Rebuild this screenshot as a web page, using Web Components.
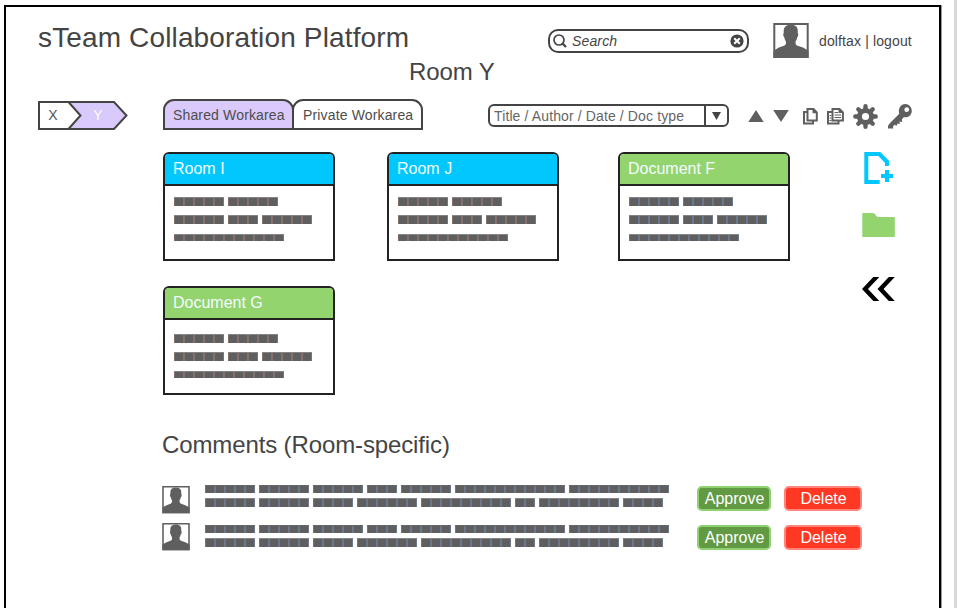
<!DOCTYPE html>
<html lang="en">
<head>
<meta charset="utf-8">
<title>sTeam Collaboration Platform</title>
<style>
html,body{margin:0;height:100%;overflow:hidden;background:#fff}
body{font-family:"Liberation Sans",Arial,sans-serif;color:#444}
</style>
</head>
<body>
<steam-app></steam-app>
<script>
const define = (name, html, setup) => customElements.define(name, class extends HTMLElement {
  connectedCallback() {
    if (this.shadowRoot) return;
    const t = document.createElement('template');
    t.innerHTML = html;
    this.attachShadow({mode: 'open'}).append(t.content.cloneNode(true));
    if (setup) setup(this, this.shadowRoot);
  }
});

define('user-avatar', `
<style>:host{display:block;width:var(--size,36px);height:var(--size,36px)}svg{display:block;width:100%;height:100%}</style>
<svg viewBox="0 0 36 36" fill="#5f5f5f"><path fill="#fff" stroke="#5f5f5f" stroke-width="2" d="M1.300 1H34.700V34H1.300Z"/>
<path d="M.5 35V27.800Q6 24 11 22.800Q13.300 22 13 18.500Q11.700 17 11.300 14.500Q10.200 14 10.200 10.800L10.800 10C10.200 4.500 12.500 1.800 17.700 1.800C23.200 1.800 25.400 4.500 24.700 10L25.300 10.800Q25.300 14 24.200 14.500Q23.800 17 22.500 18.500Q22.200 22 24.500 22.800Q30 24 35.500 27.800V35Z"/></svg>`);

const ICONS = {
  up: [16, 12, '<path d="M8 0 15.700 12H.3Z"/>'],
  down: [16, 12, '<path d="M.2 0H15.800L8 12Z"/>'],
  copy: [15, 17, '<g fill="#fff" stroke="#5f5f5f" stroke-width="2"><path d="M1 4H10V15.500H1Z"/><path d="M4.500 1H10.500L13.800 4.300V12.500H4.500Z"/></g><path d="M9.500 1V5.200H14L10 1Z"/>'],
  paste: [17, 17, '<g fill="#fff" stroke="#5f5f5f" stroke-width="2"><path d="M1 4H11.500V15.500H1Z"/><path d="M5.500 1H12.500L15.900 4.300V12.500H5.500Z"/></g><path d="M11.500 1V5H16L12 1Z"/><path stroke="#5f5f5f" d="M7.500 4.500H11M7.500 7H14M7.500 9.500H14M2.500 7.500H4.500M2.500 10H4.500M2.500 12.500H4.500"/>'],
  gear: [25, 25, '<path stroke="#5f5f5f" stroke-width="4.400" stroke-linecap="round" d="M12.500 2.300V6M12.500 19V22.700M2.300 12.500H6M19 12.500H22.700M5.300 5.300 8 8M17 17 19.700 19.700M5.300 19.700 8 17M17 8 19.700 5.300"/><circle cx="12.500" cy="12.500" r="6.100" fill="none" stroke="#5f5f5f" stroke-width="5"/>'],
  key: [24, 25, '<path fill-rule="evenodd" d="M17.300 0A6.600 6.600 0 0 1 23.800 6.700C23.800 11.500 19.500 14 15.700 13.200L14 15.200 14 18 11.500 17.600 11.800 20 9.500 19.500 8.800 21.800 6.300 20.800 5 22.800 5.300 24.500H0V22.500Q.5 20.500 2.500 18.500L11.300 9.800C9.700 5 12.800 0 17.300 0ZM18.700 3.200A2.400 2.400 0 1 0 18.800 8A2.400 2.400 0 0 0 18.700 3.200Z"/>'],
  addfile: [30, 32, '<path fill="#00c8ff" d="M.3 0H16.200L25 8.800V14H21V11L14.500 4H4.300V28H15.700V32H.3ZM21 18H25V22H29V26H25V30H21V26H17V22H21Z"/>'],
  folder: [33, 24, '<path fill="#93d46f" d="M.3 0H11.700L15.500 4H32.800V24H.3Z"/>'],
  back: [33, 24, '<path fill="#000" d="M11.300 0H17.300L6 12 17.300 24H11.300L0 12ZM26.800 0H32.800L21.500 12 32.800 24H26.800L15.500 12Z"/>'],
  search: [14, 14, '<circle cx="6" cy="6" r="5" fill="none" stroke="#444" stroke-width="1.700"/><path stroke="#444" stroke-width="2.300" d="M9.300 9.300 13 13"/>'],
  clear: [14, 14, '<circle cx="7" cy="7" r="6.600" fill="#444"/><path stroke="#fff" stroke-width="2" d="M4.200 4.200 9.800 9.800M9.800 4.200 4.200 9.800"/>'],
  arrow: [9, 8, '<path fill="#444" d="M0 0H9L4.500 8Z"/>']
};
define('ui-icon', `<style>:host{display:block;flex:none}svg{display:block}</style>`, (host, root) => {
  const [w, h, body] = ICONS[host.getAttribute('name')];
  root.innerHTML += `<svg width="${w}" height="${h}" viewBox="0 0 ${w} ${h}" fill="#5f5f5f">${body}</svg>`;
});

/* Placeholder copy. Lines are split by "/", each is "words:height:space below";
   a word is its length in 10px blocks. */
define('block-lines', `
<style>:host{display:block}.l{display:flex;gap:4px}
i{background:repeating-linear-gradient(90deg,#84706a 0 1px,#5f5f5f 1px 9px,#6b7892 9px 10px);border-top:1px solid #858585;box-sizing:border-box}
.l.s i{border-top-color:#666}</style>`, (host, root) => {
  host.getAttribute('words').split('/').forEach(line => {
    const [words, height, after] = line.split(':');
    const row = document.createElement('div');
    row.className = 'l' + (height === '8' ? ' s' : '');
    row.style.height = height + 'px';
    row.style.marginBottom = (after || 0) + 'px';
    words.split(',').forEach(n => {
      const i = document.createElement('i');
      i.style.width = n * 10 + 'px';
      row.append(i);
    });
    root.append(row);
  });
});

define('item-card', `
<style>
:host{display:block;box-sizing:border-box;width:172px;height:109px;border:2px solid #222;border-radius:6px 6px 0 0;overflow:hidden;background:#fff}
header{height:30px;border-bottom:2px solid #222;background:#00c8ff;color:#f4fbff;font-size:16px;line-height:29px;padding-left:8px}
:host([kind=document]) header{background:#93d46f}
block-lines{padding:var(--body,11px) 0 0 9px}
</style>
<header><slot></slot></header><block-lines words="5,5:9:9/5,3,5:9:10/11:7"></block-lines>`);

define('action-button', `
<style>:host{display:block;box-sizing:border-box;width:74px;height:25px;border:2px solid #8fd070;border-radius:5px;background:#619a43;color:#fff;font-size:16px;line-height:21px;text-align:center;text-indent:1px}
:host([kind=delete]){width:78px;background:#ff3823;border-color:#ff857a}</style><slot></slot>`);

define('comment-row', `
<style>:host{display:flex;height:27px}
user-avatar{--size:28px;margin-top:var(--av,1px)}
block-lines{width:492px;margin-left:15px}
action-button{margin-top:var(--btn,1px)}
action-button[kind]{margin-left:13px}</style>
<user-avatar></user-avatar><block-lines words="5,5,5,3,5,11,10:8:5/5,5,4,6,9,2,8,4:9"></block-lines>
<action-button>Approve</action-button><action-button kind="delete">Delete</action-button>`);

define('room-path', `
<style>:host{display:grid;width:90px;height:29px;font-size:14px;line-height:29px}svg,div{grid-area:1/1}
div{display:flex;color:#555}::slotted(*){width:30px;text-align:center}::slotted(:last-child){color:#fff;margin-left:15px}</style>
<svg width="90" height="29" stroke="#444" stroke-width="2" fill="#dac9fb"><path d="M30 1H76L88.500 14.500 76 28H30Z"/><path fill="#fff" d="M1 1H30.500L42.500 14.500 30.500 28H1Z"/></svg><div><slot></slot></div>`);

define('tab-item', `
<style>:host{display:block;box-sizing:border-box;width:131px;height:31px;border:2px solid #444;border-radius:11px 11px 0 0;background:#fff;padding-left:8px;font-size:14px;line-height:29px;letter-spacing:.15px;color:#4d4d4d;white-space:nowrap}
:host([selected]){background:#dac9fb}:host(:not([selected])){margin-left:-2px;padding-left:9px}</style><slot></slot>`);

define('search-field', `
<style>:host{display:flex;align-items:center;box-sizing:border-box;width:201px;height:24px;border:2px solid #444;border-radius:10px;padding:0 3px;font:italic 14px/20px "Liberation Sans",Arial,sans-serif;letter-spacing:.15px}
span{flex:1;margin-left:5px}</style>
<ui-icon name="search"></ui-icon><span><slot></slot></span><ui-icon name="clear"></ui-icon>`);

define('select-field', `
<style>:host{display:flex;box-sizing:border-box;width:241px;height:23px;border:2px solid #444;border-radius:6px;font-size:14px;line-height:20px;letter-spacing:.12px;color:#666;white-space:nowrap}
span{flex:1;padding-left:4px}b{width:21px;border-left:2px solid #444;display:grid;place-items:center}</style>
<span><slot></slot></span><b><ui-icon name="arrow"></ui-icon></b>`);

define('steam-app', `
<style>
:host{display:flex;height:608px;box-sizing:border-box;padding:5px 0 0 4px;border-right:3px solid #d8d8d8;overflow:hidden}
main{box-sizing:border-box;width:937px;height:620px;border:2px solid #000;border-bottom:0;box-shadow:1px 0 #999;padding-left:32px;flex:none}
h1,h2{font-weight:400;margin:0;white-space:nowrap}
.head{display:flex;height:48px}
h1{width:510px;font-size:28px;line-height:32px;margin-top:15px;letter-spacing:.14px}
search-field{margin-top:22px}
.head user-avatar{margin:16px 0 0 24px}
.user{margin:24px 0 0 10px;font-size:14px;line-height:20px;letter-spacing:.13px;white-space:nowrap}
.room{padding-left:371px;font-size:24px;line-height:28px;margin-top:3px;letter-spacing:-.1px}
.bar{display:flex;margin-top:13px;height:31px}
room-path{margin-top:2px}
.tabs{display:flex;margin-left:35px;width:325px}
select-field{margin-top:5px}
.tools{display:flex;align-items:center;height:25px;margin:5px 0 0 19px}
.tri{margin-top:-2px}
.main{display:grid;grid-template-columns:700px auto;margin-top:22px;height:272px}
.cards{display:grid;grid-template-columns:224px 231px 172px;grid-auto-rows:109px;row-gap:25px;padding-left:125px}
.last{--body:14px}
.side{display:flex;flex-direction:column;margin-left:124px}
.comments{padding-left:124px}
.comments h2{font-size:24px;line-height:30px;margin-top:6px;letter-spacing:-.12px}
comment-row{margin-top:25px}comment-row+comment-row{margin-top:13px;--av:-2px;--btn:0px}
</style>
<main>
<div class="head"><h1>sTeam Collaboration Platform</h1><search-field>Search</search-field><user-avatar></user-avatar><div class="user">dolftax | logout</div></div>
<h2 class="room">Room Y</h2>
<div class="bar"><room-path><span>X</span><span>Y</span></room-path>
<div class="tabs"><tab-item selected>Shared Workarea</tab-item><tab-item>Private Workarea</tab-item></div>
<select-field>Title / Author / Date / Doc type</select-field>
<div class="tools"><ui-icon class="tri" name="up"></ui-icon><ui-icon class="tri" name="down" style="margin-left:9px"></ui-icon><ui-icon name="copy" style="margin-left:14px"></ui-icon><ui-icon name="paste" style="margin-left:9px"></ui-icon><ui-icon name="gear" style="margin-left:9px"></ui-icon><ui-icon name="key" style="margin-left:10px"></ui-icon></div></div>
<div class="main"><div class="cards"><item-card>Room I</item-card><item-card>Room J</item-card><item-card kind="document">Document F</item-card><item-card kind="document" class="last">Document G</item-card></div>
<div class="side"><ui-icon name="addfile" style="margin-left:2px"></ui-icon><ui-icon name="folder" style="margin-top:29px"></ui-icon><ui-icon name="back" style="margin-top:40px"></ui-icon></div></div>
<section class="comments"><h2>Comments (Room-specific)</h2><comment-row></comment-row><comment-row></comment-row></section>
</main>`);
</script>
</body>
</html>
